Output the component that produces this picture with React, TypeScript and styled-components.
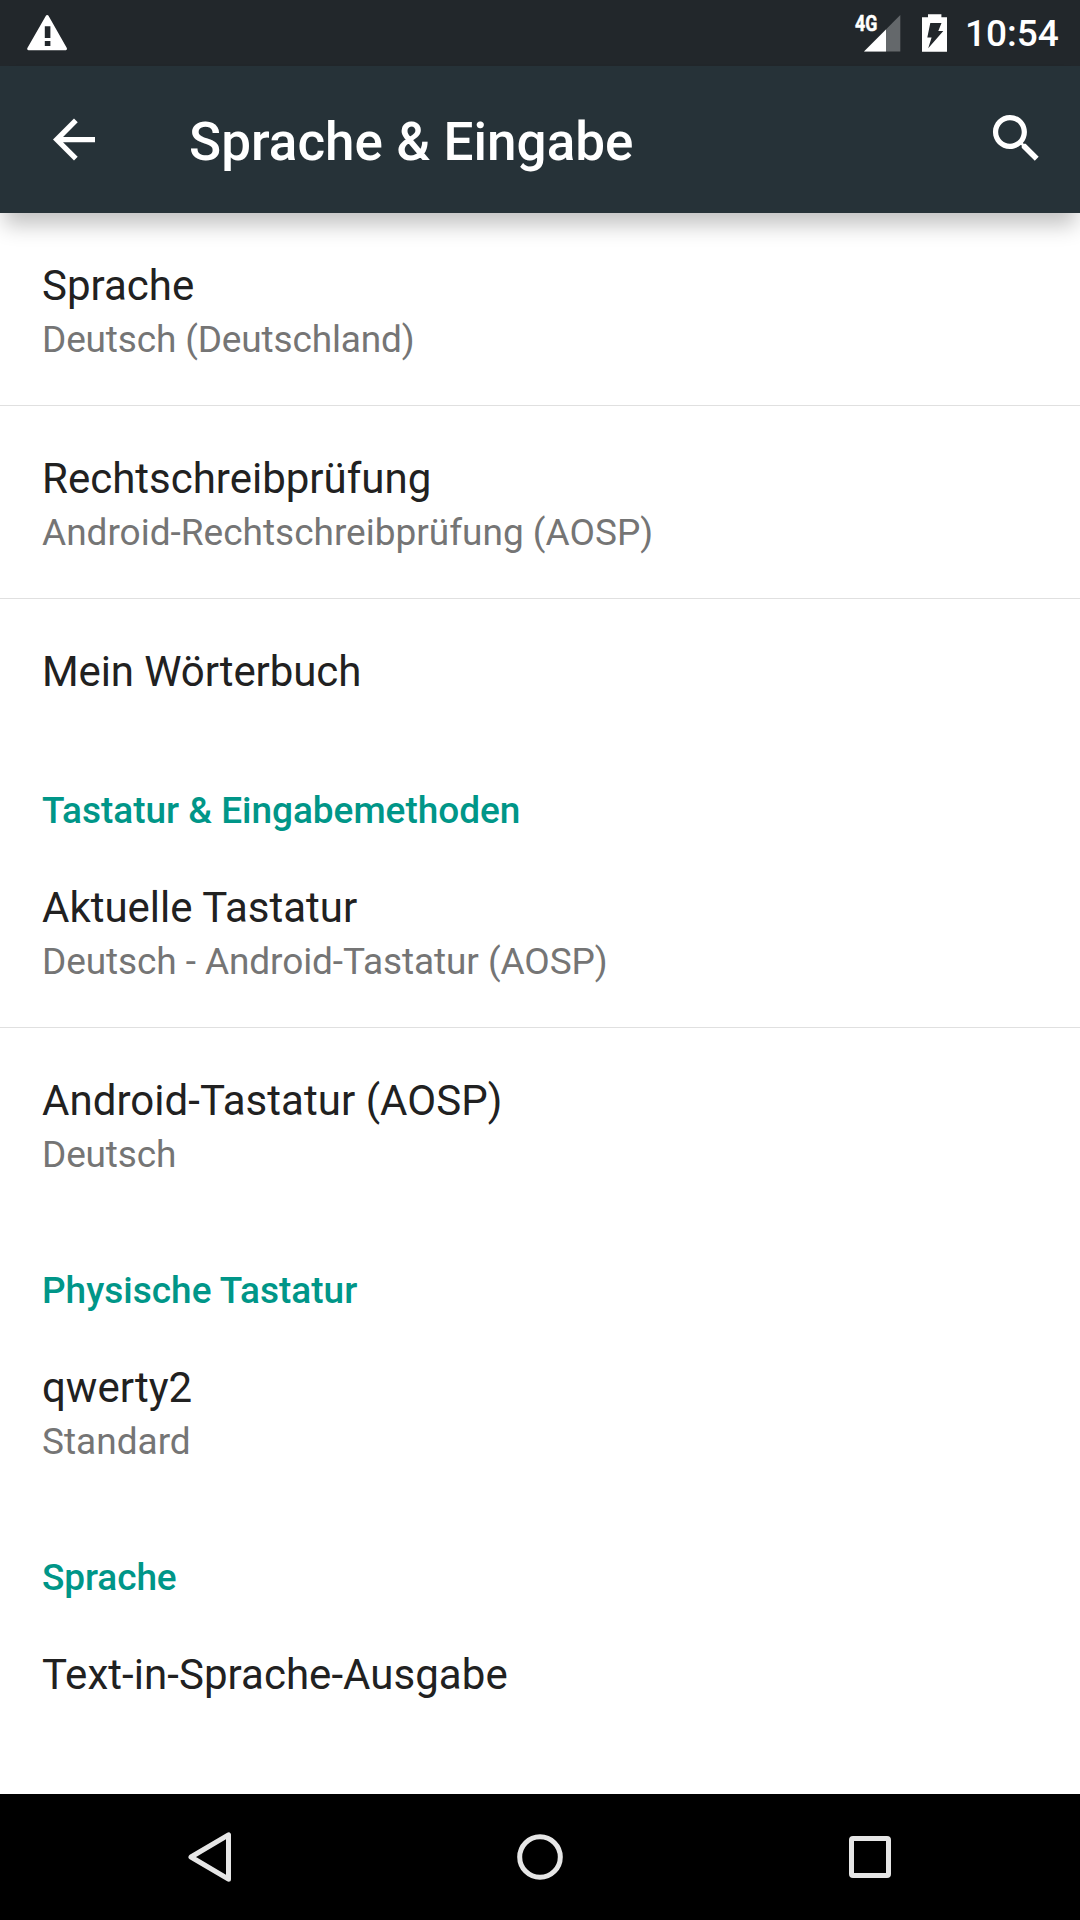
import React from "react";
import styled, { createGlobalStyle } from "styled-components";

const Global = createGlobalStyle`
  * { box-sizing: border-box; }
  body { margin: 0; background: #fff; font-family: Roboto, sans-serif; }
`;

const Screen = styled.div`
  width: 1080px;
  height: 1920px;
  display: flex;
  flex-direction: column;
  overflow: hidden;
  background: #fff;
`;

const StatusBar = styled.div`
  flex: none;
  height: 66px;
  display: flex;
  align-items: center;
  background: #22272b;
  color: #fff;
`;

const Icon = styled.svg`
  flex: none;
  display: block;
`;

const Spacer = styled.div`
  flex: 1;
`;

const Clock = styled.div`
  width: 115px;
  font-size: 37px;
  font-weight: 500;
  line-height: 66px;
  padding-top: 2px;
  white-space: nowrap;
`;

const Toolbar = styled.header`
  flex: none;
  height: 147px;
  display: flex;
  align-items: center;
  background: #263238;
  box-shadow: 0 16px 20px -4px rgba(0, 0, 0, 0.24);
`;

const Title = styled.h1`
  flex: 1;
  margin: 0;
  padding-top: 6px;
  font-size: 53px;
  font-weight: 500;
  line-height: 141px;
  letter-spacing: 0.04px;
  color: #fff;
`;

const List = styled.main`
  flex: 1;
`;

const Row = styled.div<{ $h: number; $divider?: boolean }>`
  height: ${(p) => p.$h}px;
  padding: 45px 42px 0;
  border-bottom: ${(p) => (p.$divider ? "1px solid #e0e0e0" : "none")};
`;

const RowTitle = styled.div<{ $track?: number }>`
  font-size: 42px;
  line-height: 56px;
  letter-spacing: ${(p) => p.$track ?? 0}px;
  color: #212121;
`;

const RowSummary = styled.div<{ $track?: number }>`
  padding-top: 1px;
  font-size: 37px;
  line-height: 50px;
  letter-spacing: ${(p) => p.$track ?? 0}px;
  color: #757575;
`;

const Category = styled.h2<{ $track?: number }>`
  margin: 0;
  height: 90px;
  padding: 41px 42px 0;
  font-size: 37px;
  font-weight: 500;
  line-height: 49px;
  letter-spacing: ${(p) => p.$track ?? 0}px;
  color: #009688;
`;

const NavBar = styled.nav`
  flex: none;
  height: 126px;
  display: flex;
  justify-content: center;
  background: #000;
`;

const NavButton = styled.button`
  width: 330px;
  height: 126px;
  padding: 0;
  border: 0;
  background: none;
  display: flex;
  justify-content: center;
`;

type Item = {
  category?: string;
  title?: string;
  summary?: string;
  h?: number;
  divider?: boolean;
  track?: number;
  summaryTrack?: number;
};

const items: Item[] = [
  { title: "Sprache", summary: "Deutsch (Deutschland)", h: 193, divider: true, summaryTrack: -0.15 },
  { title: "Rechtschreibprüfung", summary: "Android-Rechtschreibprüfung (AOSP)", h: 193, divider: true },
  { title: "Mein Wörterbuch", h: 146, track: -0.1 },
  { category: "Tastatur & Eingabemethoden", track: -0.03 },
  { title: "Aktuelle Tastatur", summary: "Deutsch - Android-Tastatur (AOSP)", h: 193, divider: true, summaryTrack: -0.09 },
  { title: "Android-Tastatur (AOSP)", summary: "Deutsch", h: 197, track: 0.04, summaryTrack: -0.15 },
  { category: "Physische Tastatur" },
  { title: "qwerty2", summary: "Standard", h: 197 },
  { category: "Sprache", track: -0.1 },
  { title: "Text-in-Sprache-Ausgabe", h: 146, track: 0.05 },
];

export default function App() {
  return (
    <Screen>
      <Global />
      <StatusBar>
        <Icon width="100" height="66" viewBox="0 0 100 66">
          <path d="M47.2 16.5 L65.5 48.8 H28.7 Z" fill="#fff" stroke="#fff" strokeWidth="3" strokeLinejoin="round" />
          <path d="M44.8 26.3h5.6v11.7h-5.6zM44.8 41h5.6v5h-5.6z" fill="#22272b" />
        </Icon>
        <Spacer />
        <Icon width="66" height="66" viewBox="850 0 66 66">
          <path d="M864 51.5 L900.3 15 V51.5 Z" fill="#64686b" />
          <path d="M864 51.5 L886 29.4 V51.5 Z" fill="#fff" />
          <text
            x="855"
            y="31.2"
            fontSize="21.5"
            fontWeight="700"
            fill="#fff"
            stroke="#fff"
            strokeWidth="0.5"
            textLength="22.3"
            lengthAdjust="spacingAndGlyphs"
          >
            4G
          </text>
        </Icon>
        <Icon width="49" height="66" viewBox="916 0 49 66">
          <path d="M922 17.3h6v-3h13.4v3h5.6v34.4h-25z" fill="#fff" />
          <path d="M930.3 22.9h11.2l-3.2 8h5L928.2 48.2l3.4-10.8h-4.3z" fill="#22272b" />
        </Icon>
        <Clock>10:54</Clock>
      </StatusBar>
      <Toolbar>
        <Icon width="189" height="147" viewBox="0 66 189 147">
          <path transform="translate(42.5 108) scale(2.625)" d="M20 11H7.83l5.59-5.59L12 4l-8 8 8 8 1.41-1.41L7.83 13H20v-2z" fill="#fff" />
        </Icon>
        <Title>Sprache &amp; Eingabe</Title>
        <Icon width="110" height="147" viewBox="970 66 110 147">
          <path
            transform="translate(985.1 107.1) scale(2.615)"
            d="M15.5 14h-.79l-.28-.27C15.41 12.59 16 11.11 16 9.5 16 5.91 13.09 3 9.5 3S3 5.91 3 9.5 5.91 16 9.5 16c1.61 0 3.09-.59 4.23-1.57l.27.28v.79l5 4.99L20.49 19l-4.99-5zm-6 0C7.01 14 5 11.99 5 9.5S7.01 5 9.5 5 14 7.01 14 9.5 11.99 14 9.5 14z"
            fill="#fff"
          />
        </Icon>
      </Toolbar>
      <List>
        {items.map((it, i) =>
          it.category ? (
            <Category key={i} $track={it.track}>{it.category}</Category>
          ) : (
            <Row key={i} $h={it.h ?? 193} $divider={it.divider}>
              <RowTitle $track={it.track}>{it.title}</RowTitle>
              {it.summary && <RowSummary $track={it.summaryTrack}>{it.summary}</RowSummary>}
            </Row>
          )
        )}
      </List>
      <NavBar>
        <NavButton aria-label="Zurück">
          <Icon width="126" height="126" viewBox="147 1794 126 126" fill="none" stroke="#e6e6e6" strokeWidth="5">
            <path d="M228.5 1834.8V1879.2L191 1857Z" strokeLinejoin="round" />
          </Icon>
        </NavButton>
        <NavButton aria-label="Startbildschirm">
          <Icon width="126" height="126" viewBox="477 1794 126 126" fill="none" stroke="#e6e6e6" strokeWidth="5">
            <circle cx="540" cy="1857" r="20.3" />
          </Icon>
        </NavButton>
        <NavButton aria-label="Übersicht">
          <Icon width="126" height="126" viewBox="807 1794 126 126" fill="none" stroke="#e6e6e6" strokeWidth="5">
            <rect x="851.5" y="1838.5" width="37" height="37" rx="1.5" />
          </Icon>
        </NavButton>
      </NavBar>
    </Screen>
  );
}
